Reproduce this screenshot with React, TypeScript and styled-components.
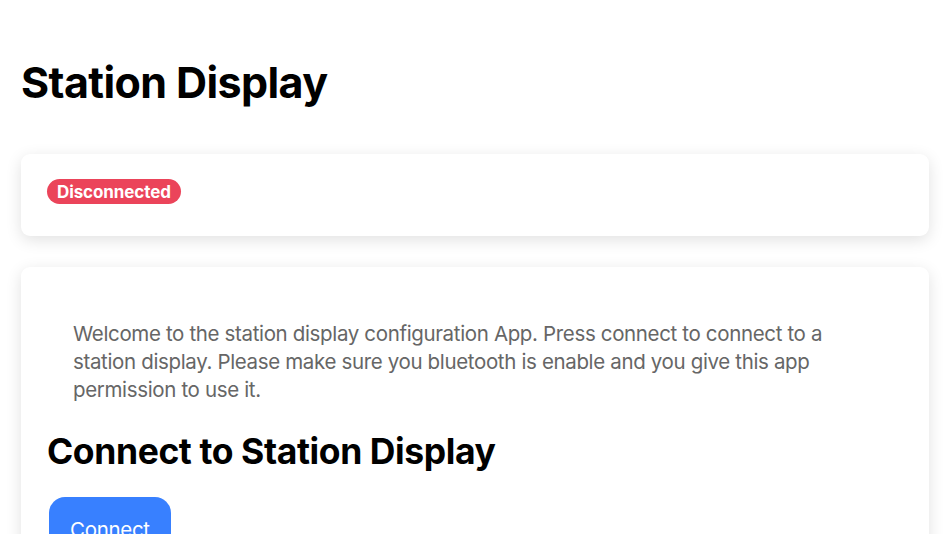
import styled, { createGlobalStyle } from 'styled-components';

const GlobalStyle = createGlobalStyle`
  html, body {
    margin: 0;
    padding: 0;
    background: #ffffff;
    font-family: Inter, "Noto Sans", "Liberation Sans", sans-serif;
    overflow: hidden;
  }
`;

const Page = styled.main`
  display: flex;
  flex-direction: column;
  padding: 55px 21px 0;
  height: 534px;
  box-sizing: border-box;
`;

const Title = styled.h1`
  margin: 0 0 45px;
  font-size: 43px;
  line-height: 54px;
  font-weight: 700;
  color: #000;
  letter-spacing: -0.6px;
`;

const Card = styled.section<{ $pad: string }>`
  background: #fff;
  border-radius: 9px;
  box-shadow: 0 4px 16px rgba(0, 0, 0, 0.12);
  padding: ${(p) => p.$pad};
  margin-bottom: 31px;
  display: flex;
  flex-direction: column;
  align-items: flex-start;
`;

const Badge = styled.span<{ $color: string }>`
  display: inline-flex;
  align-items: center;
  height: 25px;
  padding: 0 10px;
  border-radius: 13px;
  background: ${(p) => p.$color};
  color: #fff;
  font-size: 17px;
  font-weight: 700;
  letter-spacing: -0.1px;
`;

const Intro = styled.p`
  margin: 0 0 25px;
  padding: 0 26px;
  font-size: 20.5px;
  line-height: 28px;
  color: #666666;
  letter-spacing: -0.35px;
`;

const SubTitle = styled.h2`
  margin: 0 0 22px;
  font-size: 35.5px;
  line-height: 46px;
  font-weight: 700;
  color: #000;
  letter-spacing: -0.4px;
`;

const ConnectButton = styled.button`
  margin-left: 2px;
  height: 64px;
  padding: 0 21px;
  border: none;
  border-radius: 16px;
  background: #3880ff;
  color: #fff;
  font-family: inherit;
  font-size: 20.5px;
  letter-spacing: -0.3px;
  display: flex;
  align-items: center;
  cursor: pointer;
`;

export default function App() {
  return (
    <>
      <GlobalStyle />
      <Page>
        <Title>Station Display</Title>
        <Card $pad="25px 26px 32px">
          <Badge $color="#eb445a">Disconnected</Badge>
        </Card>
        <Card $pad="53px 26px 20px">
          <Intro>
            Welcome to the station display configuration App. Press connect to connect to a
            station display. Please make sure you bluetooth is enable and you give this app
            permission to use it.
          </Intro>
          <SubTitle>Connect to Station Display</SubTitle>
          <ConnectButton>Connect</ConnectButton>
        </Card>
      </Page>
    </>
  );
}
